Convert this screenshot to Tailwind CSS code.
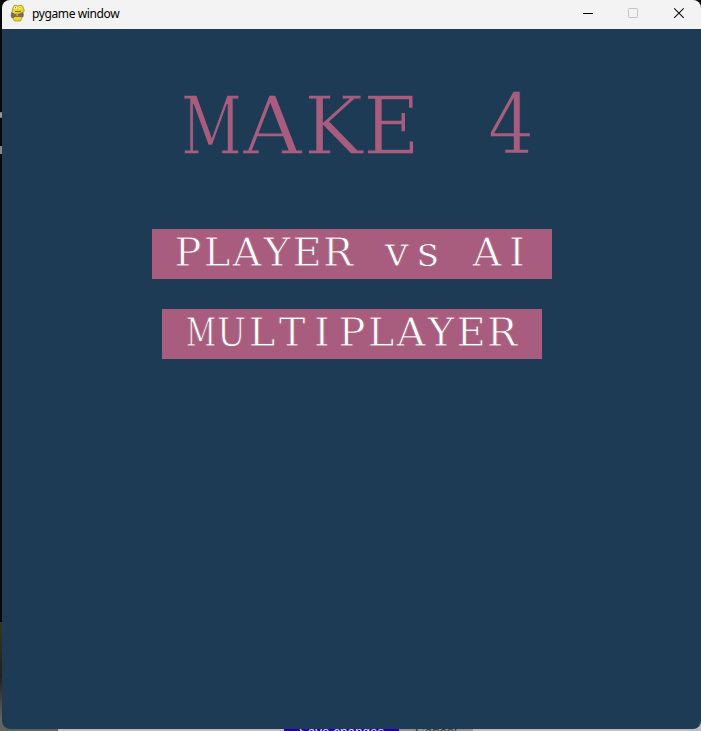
<!DOCTYPE html>
<html lang="en"><head><meta charset="utf-8"><title>pygame window</title>
<script src="https://cdn.jsdelivr.net/npm/@tailwindcss/browser@4"></script></head>
<body class="relative w-[701px] h-[731px] overflow-hidden bg-[#080808]">
<div class="absolute left-0 top-[622px] w-[3px] h-[109px] bg-gradient-to-b from-[#35391d] via-[#241e1c] to-[#777873]"></div>
<div class="absolute left-0 top-[112px] w-[2px] h-[6px] rounded bg-[#999]"></div>
<div class="absolute left-0 top-[146px] w-[2px] h-[8px] bg-[#888]"></div>
<div class="absolute left-0 top-[720px] flex w-[701px] h-[11px] bg-[#bcbcbc] overflow-hidden text-[13.500px] font-['Liberation_Sans',sans-serif]">
<div class="w-[58px] bg-[#62645f]"></div><div class="w-[226px]"></div>
<div class="w-[115px] bg-[#1b00a8] text-[#ddd] text-center leading-4 pt-[4px] whitespace-nowrap">Save changes</div>
<div class="w-[74px] bg-[#929292] text-[#333] text-center leading-4 pt-[4px]">Cancel</div></div>
<main class="relative ml-[2px] w-[699px] h-[729px] rounded-lg overflow-hidden bg-[#1e3b55] flex flex-col">
<header class="h-[29px] shrink-0 bg-[#f3f3f3] flex items-center text-black">
<svg class="ml-[8px] mb-[3px] w-4 h-[18px]" viewBox="0 0 16 18"><path d="M3.500 2.500Q4 .7 6 1.200L8 2l2-.8q2.500-.3 3 1.500l1.200 3.500q.5 2-2 2.500L9 10l2 1.500.8 3-1.300 2.500H4.500L3 15l1-4-2-2.500L2.500 5z" fill="#ecd91f" stroke="#817619" stroke-width=".6"/><circle cx="5.500" cy="3.800" r="1.400" fill="#fffbd0"/><circle cx="10" cy="3.800" r="1.400" fill="#fffbd0"/><path d="M5.500 3.300v1M10 3.300v1M5 7.300q3 1 6-.2" stroke="#51490f" stroke-width=".8" fill="none"/><path d="M1.500 8.500l3 1.700h5l3-1.500 1 1.300-.5 3-3-.5H5l-3 1.500-1-2z" fill="#707069" stroke="#4b4a3c" stroke-width=".5"/><path d="M3 11.700h2M9.500 11.200h1.500" stroke="#bd5046"/><path d="M6 11h2" stroke="#c6c6bc"/></svg>
<span class="ml-[6px] mb-[2px] text-[12px] tracking-[-0.38px] leading-4 font-['Noto_Sans',sans-serif]">pygame window</span>
<svg class="ml-auto mr-[2px] w-[120px] h-[29px]" viewBox="0 0 120 29" fill="none"><path d="M4 13.500h10" stroke="#000"/><rect x="49.500" y="8.500" width="9" height="9" rx=".8" stroke="#c3c3c3"/><path d="M95.200 8.300l9.500 9.500M104.700 8.300L95.200 17.800" stroke="#111" stroke-width="1.100"/></svg>
</header>
<section class="h-[200px] shrink-0"><svg class="w-[699px] h-[200px]" viewBox="0 0 699 200"><text class="font-['DejaVu_Serif',serif]" font-size="80" fill="#a85d7e" stroke="#1e3b55" stroke-width="1.300" y="125"><tspan x="179" textLength="61" lengthAdjust="spacingAndGlyphs">M</tspan><tspan x="241" textLength="59" lengthAdjust="spacingAndGlyphs">A</tspan><tspan x="302" textLength="59" lengthAdjust="spacingAndGlyphs">K</tspan><tspan x="361" textLength="57" lengthAdjust="spacingAndGlyphs">E</tspan> <tspan x="486" font-size="84" textLength="46" lengthAdjust="spacingAndGlyphs">4</tspan></text></svg></section>
<button class="ml-[150px] w-[400px] h-[50px] shrink-0 bg-[#a85d7e]"><svg class="w-[400px] h-[50px]" viewBox="0 0 400 50"><text class="font-['DejaVu_Serif',serif]" text-anchor="middle" font-size="40" fill="#fff" stroke="#a85d7e" stroke-width=".8" y="37"><tspan x="36 65 95 125 155 186 216">PLAYER </tspan><tspan font-size="43" x="245 276 305">vs </tspan><tspan x="335 365">AI</tspan></text></svg></button>
<button class="ml-[160px] mt-[30px] w-[380px] h-[50px] shrink-0 bg-[#a85d7e]"><svg class="w-[380px] h-[50px]" viewBox="0 0 380 50"><text class="font-['DejaVu_Serif',serif]" text-anchor="middle" font-size="40" fill="#fff" stroke="#a85d7e" stroke-width=".8" y="37"><tspan x="39" textLength="30" lengthAdjust="spacingAndGlyphs">M</tspan><tspan x="69.500" textLength="29" lengthAdjust="spacingAndGlyphs">U</tspan><tspan x="100 130 160 190 219 249 279 309 340">LTIPLAYER</tspan></text></svg></button>
</main></body></html>
